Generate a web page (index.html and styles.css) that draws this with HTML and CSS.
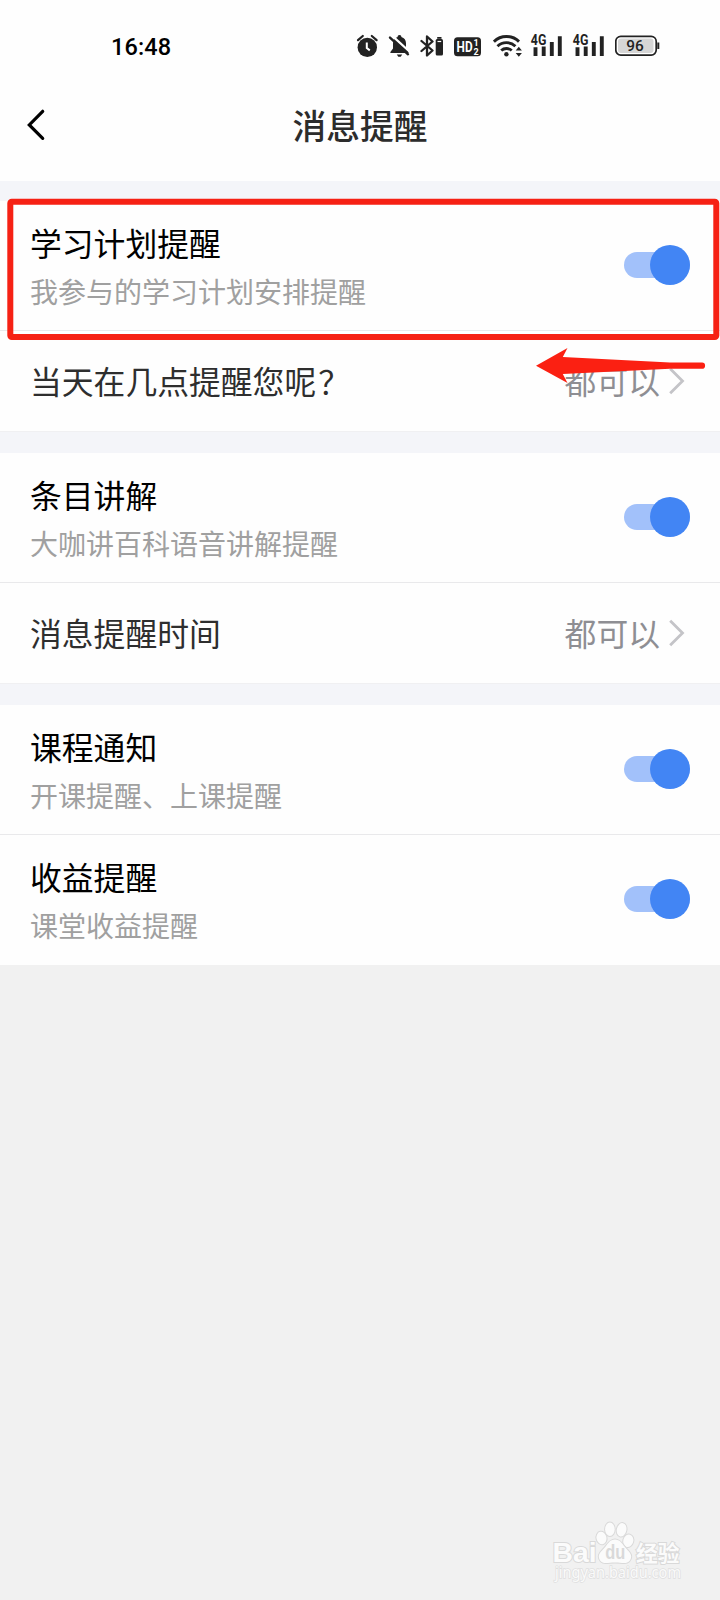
FILE: index.html
```html
<!DOCTYPE html>
<html lang="zh-CN">
<head>
<meta charset="utf-8">
<title>消息提醒</title>
<link rel="stylesheet" href="styles.css">
</head>
<body>
<div class="screen">
  <div class="statusbar">
    <span class="clock">16:48</span>
    <div class="status-icons">
      <svg class="alarm" width="23" height="26" viewBox="0 0 23 26">
        <circle cx="11.3" cy="13.4" r="9.7" fill="#222"/>
        <path d="M2 6.200L6.800 2M20.600 6.200L15.800 2" stroke="#222" stroke-width="2.200" stroke-linecap="round"/>
        <path d="M10.800 8.500v5.600l3 2.300" fill="none" stroke="#fff" stroke-width="2"/>
      </svg>
      <svg class="bell" width="23" height="26" viewBox="0 0 23 26">
        <path d="M11.500 1c1.300 0 1.900.8 1.900 1.900 3 .9 4.600 3.200 4.600 6.400v5.200l2.600 3.500v1H2.400v-1L5 14.500V9.300c0-3.200 1.600-5.500 4.600-6.400C9.600 1.800 10.200 1 11.500 1z" fill="#222"/>
        <path d="M8.800 20.500h5.400l-1.500 2.200h-2.400z" fill="#222"/>
        <path d="M4 1.600L22 18" stroke="#fff" stroke-width="2.200"/>
        <path d="M2 3.600L20 20.300" stroke="#222" stroke-width="2.400" stroke-linecap="round"/>
      </svg>
      <svg class="bluetooth" width="25" height="26" viewBox="0 0 25 26">
        <path d="M1.500 7l11 9.500-5.500 5V2.500l5.500 5-11 9.500" fill="none" stroke="#222" stroke-width="2.300" stroke-linejoin="round" stroke-linecap="round"/>
        <rect x="15.700" y="5" width="7.300" height="16.500" rx="1.500" fill="#222"/>
        <path d="M17.200 3.900h4.300" stroke="#222" stroke-width="1.800"/>
        <path d="M17.500 7.500h3.700" stroke="#fff" stroke-width="1.200"/>
      </svg>
      <svg class="hd" width="27" height="26" viewBox="0 0 27 26">
        <rect y="3.300" width="27" height="19" rx="3.500" fill="#222"/>
        <g class="hd-text">
          <text x="2.600" y="18.400" font-size="15.500" textLength="16" lengthAdjust="spacingAndGlyphs">HD</text>
          <text x="19.400" y="12" font-size="9">1</text>
          <text x="19.400" y="20.600" font-size="9">2</text>
        </g>
      </svg>
      <svg class="wifi" width="29" height="26" viewBox="0 0 29 26">
        <g fill="none" stroke="#222" stroke-width="2.900">
          <path d="M.9 7.600C7.800.8 19 .8 26 7.600"/>
          <path d="M4.500 12.200c4.900-4.800 13-4.800 17.900 0"/>
          <path d="M8.200 16.500c3-2.700 7.500-2.700 10.500 0"/>
        </g>
        <circle cx="13.400" cy="20.300" r="2.200" fill="#222"/>
        <path d="M22.700 16.600l3.100-3.800 3.100 3.800zM22.700 18.900l3.100 3.800 3.100-3.800z" fill="#222"/>
      </svg>
      <svg class="signal" width="33" height="26" viewBox="0 0 33 26">
        <text class="net" x=".8" y="11.200" font-size="14.500" textLength="15.500" lengthAdjust="spacingAndGlyphs">4G</text>
        <path d="M5.500 13.300V22M13.700 12.600V22M21.800 8v14M29.800 2.200V22" stroke="#222" stroke-width="3.900"/>
      </svg>
      <svg class="signal" width="33" height="26" viewBox="0 0 33 26">
        <text class="net" x=".8" y="11.200" font-size="14.500" textLength="15.500" lengthAdjust="spacingAndGlyphs">4G</text>
        <path d="M5.500 13.300V22M13.700 12.600V22M21.800 8v14M29.800 2.200V22" stroke="#222" stroke-width="3.900"/>
      </svg>
      <svg class="battery" width="45" height="26" viewBox="0 0 45 26">
        <rect x=".8" y="2.300" width="40.400" height="18.800" rx="5" fill="#fff" stroke="#222" stroke-width="1.700"/>
        <rect x="3" y="4.500" width="35.500" height="14.400" rx="3" fill="#d6d6d6"/>
        <path d="M43.300 8.500v6.500" stroke="#222" stroke-width="2"/>
        <text class="level" x="11.300" y="17.100" font-size="15.500" textLength="17.500" lengthAdjust="spacingAndGlyphs">96</text>
      </svg>
    </div>
  </div>

  <header class="navbar">
    <svg class="back" width="20" height="32" viewBox="0 0 20 32"><path d="M16.700 2.300L3.300 16l13.400 13.300" fill="none" stroke="#000" stroke-width="3.200" stroke-linecap="round"/></svg>
    <h1 class="title">消息提醒</h1>
  </header>

  <main class="sections">
    <section class="group">
      <div class="row tall">
        <div class="labels"><div class="name">学习计划提醒</div><div class="desc">我参与的学习计划安排提醒</div></div>
        <span class="toggle"></span>
      </div>
      <div class="row">
        <div class="question">当天在几点提醒您呢<span class="mark">？</span></div>
        <div class="value"><span class="choice">都可以</span><svg class="chevron" width="18" height="28" viewBox="0 0 18 28"><path d="M2.200 1.800L14.500 14 2.200 26.200" fill="none" stroke="#c4c4c8" stroke-width="2.800"/></svg></div>
      </div>
    </section>
    <section class="group">
      <div class="row tall">
        <div class="labels"><div class="name">条目讲解</div><div class="desc">大咖讲百科语音讲解提醒</div></div>
        <span class="toggle"></span>
      </div>
      <div class="row">
        <div class="question">消息提醒时间</div>
        <div class="value"><span class="choice">都可以</span><svg class="chevron" width="18" height="28" viewBox="0 0 18 28"><path d="M2.200 1.800L14.500 14 2.200 26.200" fill="none" stroke="#c4c4c8" stroke-width="2.800"/></svg></div>
      </div>
    </section>
    <section class="group">
      <div class="row tall">
        <div class="labels"><div class="name">课程通知</div><div class="desc">开课提醒、上课提醒</div></div>
        <span class="toggle"></span>
      </div>
      <div class="row tall last">
        <div class="labels"><div class="name">收益提醒</div><div class="desc">课堂收益提醒</div></div>
        <span class="toggle"></span>
      </div>
    </section>
  </main>

  <svg class="annotation" width="720" height="200" viewBox="0 190 720 200">
    <rect x="10.300" y="201.700" width="706" height="135.300" rx="1.500" fill="none" stroke="#f62114" stroke-width="6"/>
    <path d="M536 365.700L567.500 348l-4.700 9L670 362.600h32a3.100 3.100 0 0 1 0 6.200h-32L562.800 374l4.700 9z" fill="#fb2012"/>
  </svg>

  <svg class="watermark" width="150" height="76" viewBox="0 0 150 76">
    <g class="wm-shape">
      <ellipse cx="60.500" cy="18" rx="5" ry="6.300" transform="rotate(-12 60.500 18)"/>
      <ellipse cx="68.900" cy="9.300" rx="4.800" ry="6.800"/>
      <ellipse cx="80.600" cy="9.800" rx="4.800" ry="6.800" transform="rotate(12 80.600 9.800)"/>
      <ellipse cx="87.300" cy="20.800" rx="5" ry="6.300" transform="rotate(15 87.300 20.800)"/>
      <path d="M74 19.500c4.800 0 6.800 3.700 9.600 7.200s6.600 6 6.600 9.800-3 6.500-6.600 6.500-6-.6-9.600-.6-6 .6-9.600.6-6.600-2.700-6.600-6.500 3.800-6.300 6.600-9.800 4.800-7.200 9.600-7.200z"/>
    </g>
    <text class="wm-latin" x="11.500" y="41.500" font-size="28.500" textLength="44" lengthAdjust="spacingAndGlyphs">Bai</text>
    <text class="wm-du" x="64.200" y="39" font-size="20" textLength="20" lengthAdjust="spacingAndGlyphs">du</text>
    <text class="wm-cn" x="95" y="40.500" font-size="22" textLength="43.500" lengthAdjust="spacingAndGlyphs">经验</text>
    <text class="wm-url" x="14" y="58" font-size="15.500" textLength="126" lengthAdjust="spacingAndGlyphs">jingyan.baidu.com</text>
  </svg>
</div>
</body>
</html>
```
FILE: styles.css
```css
* { box-sizing: border-box; }
body { margin: 0; font-family: "Liberation Sans", "Noto Sans CJK SC", sans-serif; }
svg { display: block; flex: none; }

.screen {
  position: relative;
  width: 720px;
  height: 1600px;
  overflow: hidden;
  background: #f1f1f1;
}

.statusbar {
  display: flex;
  justify-content: space-between;
  height: 68px;
  padding: 34px 60px 0 111px;
  background: #fefefe;
}
.clock { font: 500 23.5px/26px Roboto, sans-serif; color: #000; letter-spacing: 0.1px; }
.status-icons { display: flex; }
.bell, .bluetooth { margin-left: 9px; }
.hd { margin-left: 9px; }
.wifi { margin-left: 12px; }
.signal { margin-left: 8px; }
.signal + .signal { margin-left: 9px; }
.battery { margin-left: 10px; }
.hd-text { font-family: Roboto, sans-serif; font-weight: 700; fill: #fff; }
.net { font-family: Roboto, sans-serif; font-weight: 700; fill: #222; }
.level { font-family: Roboto, sans-serif; font-weight: 500; fill: #222; }

.navbar {
  display: grid;
  grid-template-columns: 80px 1fr 80px;
  align-items: center;
  height: 113px;
  background: #fefefe;
}
.back { margin-left: 26px; }
.title {
  margin: 4px 0 0;
  text-align: center;
  font-size: 33.7px;
  line-height: 48px;
  font-weight: 500;
  color: #2c2c2c;
}

.sections {
  display: flex;
  flex-direction: column;
  gap: 21px;
  padding-top: 20px;
  background: #f4f5f9;
}
.group { background: #fefefe; }
.row {
  display: flex;
  align-items: center;
  justify-content: space-between;
  height: 101px;
  padding: 0 30px;
  border-bottom: 1px solid #f0f0f2;
}
.tall { height: 130px; border-bottom-color: #e9e9eb; }
.last { border-bottom-color: transparent; }
.labels, .question { padding-top: 4px; }
.name { font-size: 31.8px; line-height: 48px; color: #000; }
.desc { font-size: 28px; line-height: 42px; margin-top: 4px; color: #a0a0a0; }
.question { font-size: 31.8px; line-height: 48px; color: #2e2e2e; }
.mark { margin-left: 2px; }
.value {
  display: flex;
  align-items: center;
  gap: 8px;
  margin-right: 4px;
  font-size: 31.8px;
  line-height: 48px;
  color: #8e8e93;
}
.choice { padding-top: 4px; }

.toggle {
  display: flex;
  align-items: center;
  justify-content: flex-end;
  width: 66px;
  height: 26px;
  margin-bottom: 1px;
  border-radius: 13px;
  background: #a2c1fa;
}
.toggle::after {
  content: "";
  flex: none;
  width: 40px;
  height: 40px;
  border-radius: 50%;
  background: #4285f4;
}

.annotation { position: absolute; left: 0; top: 190px; }
.watermark { position: absolute; left: 541px; top: 1520px; }
.wm-shape, .wm-latin, .wm-cn { fill: #fbfbfb; stroke: #d9d9d9; stroke-width: 2; paint-order: stroke; }
.wm-latin, .wm-du { font-family: "Liberation Sans", sans-serif; font-weight: 700; }
.wm-du { fill: #d9d9d9; }
.wm-cn { font-family: "Noto Sans CJK SC", sans-serif; font-weight: 700; }
.wm-url { font-family: "Noto Sans", sans-serif; fill: #fafafa; stroke: #dfdfdf; stroke-width: 1.5; paint-order: stroke; }
```
